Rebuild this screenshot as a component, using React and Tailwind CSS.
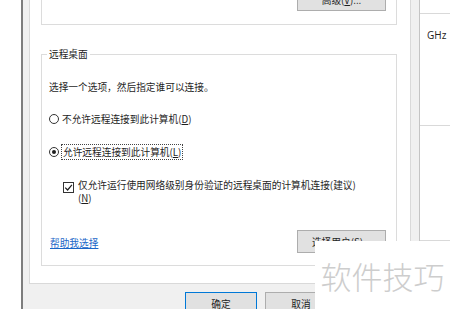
function Radio({ checked }) {
  return (
    <span className="flex h-[10px] w-[10px] shrink-0 items-center justify-center rounded-full border border-[#333] bg-white">
      {checked && <span className="h-[4px] w-[4px] rounded-full bg-[#1e1e1e]" />}
    </span>
  );
}

function Btn({ children, primary, className = '' }) {
  return (
    <button
      className={`flex h-[23px] shrink-0 items-center justify-center border bg-[#e1e1e1] text-[9.7px] leading-[14px] text-[#1e1e1e] ${
        primary ? 'border-[#0078d7]' : 'border-[#adadad]'
      } ${className}`}
    >
      {children}
    </button>
  );
}

export default function App() {
  return (
    <div className="relative flex h-[309px] w-[450px] overflow-hidden bg-white font-['Noto_Sans_CJK_SC',sans-serif] text-[9.7px] leading-[14px] text-[#1e1e1e]">
      <div className="w-[21px] shrink-0 bg-white" />

      {/* dialog */}
      <div className="flex w-[399px] shrink-0 flex-col border-l-2 border-r border-l-[#7d7d7d] border-r-[#c4c4c4] bg-[#f0f0f0] pl-[6px] pr-[8px]">
        <div className="h-[284px] shrink-0 border-x border-b border-[#d9d9d9] bg-white pl-[11px] pr-[13px]">
          <div className="flex h-[25px] justify-end border-x border-b border-[#dcdcdc] pr-[10px]">
            <Btn className="-mt-[12px] w-[89px]">
              高级(<u>V</u>)...
            </Btn>
          </div>

          <fieldset className="mt-[22px] border border-[#dcdcdc] pb-[12px] pl-[7px] pr-[10px]">
            <legend className="-ml-[2px] px-[2px] leading-[14px]">远程桌面</legend>
            <p className="mt-[19px]">选择一个选项，然后指定谁可以连接。</p>

            <div className="mt-[18px] flex h-[14px] items-center gap-[3px]">
              <Radio />
              <span>
                不允许远程连接到此计算机(<u>D</u>)
              </span>
            </div>

            <div className="mt-[18px] flex h-[16px] items-center gap-[2px]">
              <Radio checked />
              <span className="border border-dotted border-[#444] px-[1px] leading-[14px]">
                允许远程连接到此计算机(<u>L</u>)
              </span>
            </div>

            <div className="ml-[14px] mt-[19px] flex items-start gap-[4px]">
              <span className="mt-[3px] flex h-[11px] w-[11px] shrink-0 items-center justify-center border border-[#333] bg-white">
                <svg width="9" height="9" viewBox="0 0 9 9" fill="none">
                  <path d="M1.2 4.6 L3.6 7 L7.9 1.8" stroke="#1e1e1e" strokeWidth="1.2" />
                </svg>
              </span>
              <span className="w-[300px] leading-[13px]">
                仅允许运行使用网络级别身份验证的远程桌面的计算机连接(建议)
                <br />(<u>N</u>)
              </span>
            </div>

            <div className="mt-[25px] flex h-[23px] items-center justify-between">
              <a className="ml-[1px] mt-[3px] text-[#1a66c8] underline">帮助我选择</a>
              <Btn className="w-[89px]">
                选择用户(<u>S</u>)...
              </Btn>
            </div>
          </fieldset>
        </div>

        <div className="mt-[8px] flex gap-[8px] pl-[156px]">
          <Btn primary className="w-[72px]">
            确定
          </Btn>
          <Btn className="w-[72px]">取消</Btn>
          <Btn className="w-[72px]">
            应用(<u>A</u>)
          </Btn>
        </div>
      </div>

      {/* window behind */}
      <div className="flex flex-1 flex-col bg-white">
        <div className="mt-[13px] h-[113px] border-y border-[#d9d9d9] pl-[7px] pt-[14px] font-['Open_Sans',sans-serif] text-[10px] text-[#222]">
          GHz
        </div>
        <div className="h-[115px] border-b border-[#d9d9d9]" />
      </div>

      {/* watermark */}
      <div className="absolute bottom-0 right-0 flex h-[68px] w-[135px] items-center justify-center bg-white text-[31px] font-light leading-none text-[#cdcdcd]">
        软件技巧
      </div>
    </div>
  );
}
